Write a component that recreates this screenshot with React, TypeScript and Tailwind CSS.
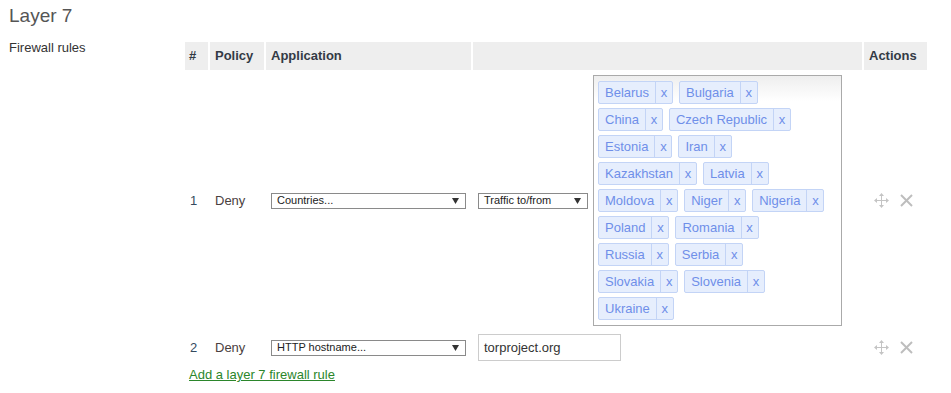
import React from 'react';

const countries = [
  'Belarus', 'Bulgaria', 'China', 'Czech Republic', 'Estonia', 'Iran', 'Kazakhstan', 'Latvia',
  'Moldova', 'Niger', 'Nigeria', 'Poland', 'Romania', 'Russia', 'Serbia', 'Slovakia', 'Slovenia', 'Ukraine',
];

const Arrow: React.FC = () => (
  <svg width="7" height="6" viewBox="0 0 7 6" className="shrink-0">
    <polygon points="0,0 7,0 3.5,6" fill="#333" />
  </svg>
);

const FakeSelect: React.FC<{ label: string; width: string }> = ({ label, width }) => (
  <div className={`${width} h-[16px] border border-[#8a8a8a] bg-white flex items-center justify-between pl-[5px] pr-[6px] text-[11px] text-[#222]`}>
    <span className="leading-none">{label}</span>
    <Arrow />
  </div>
);

const MoveIcon: React.FC = () => (
  <svg width="15" height="15" viewBox="0 0 15 15" fill="none">
    <g stroke="#c4c4c4" strokeWidth="1">
      <line x1="7.5" y1="2" x2="7.5" y2="13" />
      <line x1="2" y1="7.5" x2="13" y2="7.5" />
    </g>
    <g fill="#c4c4c4">
      <polygon points="7.5,0 5,3 10,3" />
      <polygon points="7.5,15 5,12 10,12" />
      <polygon points="0,7.5 3,5 3,10" />
      <polygon points="15,7.5 12,5 12,10" />
    </g>
  </svg>
);

const CloseIcon: React.FC = () => (
  <svg width="13" height="13" viewBox="0 0 13 13">
    <g stroke="#bdbdbd" strokeWidth="2">
      <line x1="1" y1="1" x2="12" y2="12" />
      <line x1="12" y1="1" x2="1" y2="12" />
    </g>
  </svg>
);

const Tag: React.FC<{ name: string }> = ({ name }) => (
  <div className="mt-[4px] h-[23px] flex items-stretch border border-[#c3d4f6] bg-[#e6eefd] rounded-[2px] text-[#6f8fe9] text-[13px]">
    <span className="px-[6px] flex items-center">{name}</span>
    <span className="w-[17px] border-l border-[#c3d4f6] flex items-center justify-center">x</span>
  </div>
);

const Actions: React.FC = () => (
  <div className="flex items-center pl-[10px] gap-[11px]">
    <MoveIcon />
    <CloseIcon />
  </div>
);

const App: React.FC = () => {
  return (
    <div className="min-h-screen bg-white pl-[9px] text-[#333] font-['Liberation_Sans',Arial,sans-serif]">
      <h1 className="pt-[4px] text-[19px] leading-[24px] text-[#555] font-normal">Layer 7</h1>
      <div className="flex mt-[11px]">
        <div className="w-[176px] text-[13px] leading-[18px] text-[#333]">Firewall rules</div>
        <div className="mt-[3px]">
          <div className="grid grid-cols-[23px_54px_205px_389px_63px] gap-[2px] text-[13px]">
            <div className="h-[28px] bg-[#eee] flex items-center pl-[4px] font-bold text-[#333a45]">#</div>
            <div className="h-[28px] bg-[#eee] flex items-center pl-[5px] font-bold text-[#333a45]">Policy</div>
            <div className="h-[28px] bg-[#eee] flex items-center pl-[5px] font-bold text-[#333a45]">Application</div>
            <div className="h-[28px] bg-[#eee]"></div>
            <div className="h-[28px] bg-[#eee] flex items-center pl-[5px] font-bold text-[#333a45]">Actions</div>

            <div className="py-[3px] flex items-center pl-[5px] text-[#34495e]">1</div>
            <div className="py-[3px] flex items-center pl-[5px] text-[#4a4040]">Deny</div>
            <div className="py-[3px] flex items-center pl-[5px]">
              <FakeSelect label="Countries..." width="w-[195px]" />
            </div>
            <div className="py-[3px] flex items-center pl-[5px] gap-[5px]">
              <FakeSelect label="Traffic to/from" width="w-[110px]" />
              <div className="w-[249px] border border-[#aaa] bg-[linear-gradient(to_bottom,#eeeeee_0%,#ffffff_10%)] pl-[4px] pr-[16px] pt-[1px] pb-[5px] flex flex-wrap gap-x-[6px]">
                {countries.map((c) => (
                  <Tag key={c} name={c} />
                ))}
              </div>
            </div>
            <div className="py-[3px] flex items-center">
              <Actions />
            </div>

            <div className="py-[3px] flex items-center pl-[5px] text-[#34495e]">2</div>
            <div className="py-[3px] flex items-center pl-[5px] text-[#4a4040]">Deny</div>
            <div className="py-[3px] flex items-center pl-[5px]">
              <FakeSelect label="HTTP hostname..." width="w-[195px]" />
            </div>
            <div className="py-[3px] flex items-center pl-[5px]">
              <div className="w-[143px] h-[27px] border border-[#ccc] flex items-center pl-[5px] text-[13px] text-[#333]">
                torproject.org
              </div>
            </div>
            <div className="py-[3px] flex items-center">
              <Actions />
            </div>
          </div>
          <a href="#" className="block mt-[2px] ml-[4px] w-fit text-[13px] leading-[18px] underline text-[#2b862b]">
            Add a layer 7 firewall rule
          </a>
        </div>
      </div>
    </div>
  );
};

export default App;
